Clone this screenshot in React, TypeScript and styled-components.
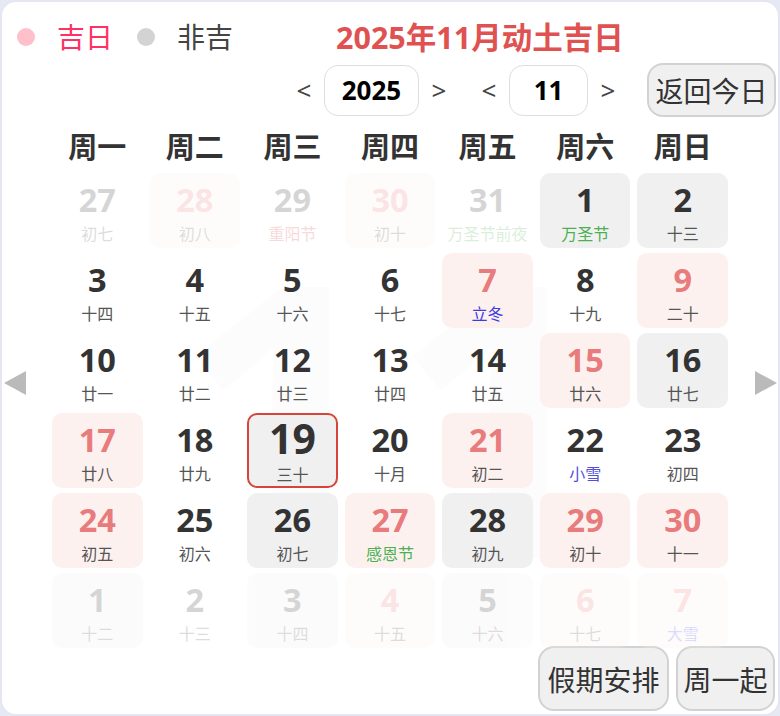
import * as React from 'react'
import styled, {createGlobalStyle, css} from 'styled-components'

const GlobalStyle = createGlobalStyle`
  html, body {
    margin: 0;
    padding: 0;
    background: #e6e9f4;
  }
  body {
    font-family: "Noto Sans", "Noto Sans CJK SC", sans-serif;
  }
`

// Outer card
const Card = styled.div`
  box-sizing: border-box;
  width: 780px;
  height: 716px;
  background: #fff;
  border: 2px solid #e4e7f3;
  border-radius: 16px;
  display: flex;
  flex-direction: column;
  overflow: hidden;
`

// Legend and title row
const LegendRow = styled.div`
  display: flex;
  align-items: center;
  height: 44px;
  margin-top: 13px;
  padding-left: 15px;
`

const Dot = styled.span<{$color: string}>`
  width: 18px;
  height: 18px;
  border-radius: 50%;
  background: ${({$color}) => $color};
  margin-right: 22px;
`

const LegendText = styled.span<{$color: string}>`
  font-size: 28px;
  color: ${({$color}) => $color};
  margin-right: 24px;
  line-height: 1;
`

const Title = styled.h1`
  margin: 0 0 0 79px;
  font-size: 30.5px;
  font-weight: 700;
  color: #e05252;
  line-height: 1;
`

// Year / month controls
const ControlRow = styled.div`
  display: flex;
  align-items: center;
  justify-content: flex-end;
  height: 54px;
  margin-top: 4px;
  padding-right: 2px;
`

const ArrowText = styled.button`
  width: 40px;
  height: 50px;
  padding: 0;
  border: none;
  background: none;
  font-family: "Noto Sans", sans-serif;
  font-size: 26px;
  color: #444;
  cursor: pointer;
`

const ValueBox = styled.div<{$width: number}>`
  box-sizing: border-box;
  width: ${({$width}) => $width}px;
  height: 51px;
  border: 1px solid #dedede;
  border-radius: 14px;
  display: flex;
  align-items: center;
  justify-content: center;
  font-size: 26px;
  font-weight: 700;
  color: #000;
`

const Spacer = styled.div<{$w: number}>`
  width: ${({$w}) => $w}px;
`

const GrayButton = styled.button<{$width: number; $height: number}>`
  box-sizing: border-box;
  width: ${({$width}) => $width}px;
  height: ${({$height}) => $height}px;
  padding: 0;
  background: #f0f0f0;
  border: 2px solid #d2d2d2;
  border-radius: 16px;
  font-family: "Noto Sans CJK SC", sans-serif;
  font-size: 28px;
  color: #333;
  display: flex;
  align-items: center;
  justify-content: center;
  cursor: pointer;
`

// Calendar body
const Main = styled.div`
  display: flex;
  align-items: center;
`

const SideArrow = styled.div<{$side: 'left' | 'right'}>`
  width: 50px;
  display: flex;
  justify-content: ${({$side}) => ($side === 'left' ? 'flex-start' : 'flex-end')};
  padding: ${({$side}) => ($side === 'left' ? '0 0 0 2px' : '0 1px 0 0')};
  box-sizing: border-box;
`

const Center = styled.div`
  width: 677px;
  display: flex;
  flex-direction: column;
`

const WeekHeader = styled.div`
  display: grid;
  grid-template-columns: repeat(7, 1fr);
  column-gap: 7px;
  height: 40px;
  padding-top: 10px;
  margin-bottom: 6px;
`

const WeekDay = styled.div`
  text-align: center;
  font-size: 29px;
  font-weight: 700;
  color: #333;
  line-height: 40px;
`

const GridWrap = styled.div`
  position: relative;
`

// Faint month number behind the days
const Watermark = styled.div`
  position: absolute;
  inset: 0;
  display: flex;
  align-items: center;
  justify-content: center;
  font-size: 380px;
  font-weight: 700;
  color: rgba(0, 0, 0, 0.011);
  pointer-events: none;
  user-select: none;
  z-index: 0;
`

const Grid = styled.div`
  position: relative;
  z-index: 1;
  display: grid;
  grid-template-columns: repeat(7, 1fr);
  grid-auto-rows: 75px;
  gap: 5px 7px;
`

type Kind = 'plain' | 'ji' | 'bad'

const Cell = styled.div<{$kind: Kind; $other: boolean; $today: boolean}>`
  box-sizing: border-box;
  border-radius: 10px;
  display: flex;
  flex-direction: column;
  align-items: center;
  justify-content: center;
  padding-top: 4px;
  background: ${({$kind}) =>
    $kind === 'ji' ? '#fdf1f0' : $kind === 'bad' ? '#f0f0f0' : 'transparent'};
  opacity: ${({$other}) => ($other ? 0.2 : 1)};
  ${({$today}) =>
    $today &&
    css`
      border: 2px solid #d6443a;
      padding-top: 0;
    `}
`

const DayNum = styled.div<{$ji: boolean; $today: boolean}>`
  font-size: ${({$today}) => ($today ? 41 : 32.5)}px;
  font-weight: 700;
  line-height: ${({$today}) => ($today ? 42 : 36)}px;
  color: ${({$ji}) => ($ji ? '#e87b7b' : '#333')};
`

const Lunar = styled.div<{$color?: string}>`
  margin-top: 4px;
  font-family: "Noto Sans CJK SC", sans-serif;
  font-size: 16px;
  line-height: 22px;
  color: ${({$color}) => $color || '#555'};
  white-space: nowrap;
`

const Footer = styled.div`
  display: flex;
  justify-content: flex-end;
  gap: 7px;
  margin-top: -2px;
  padding-right: 3px;
`

const Triangle = ({dir}: {dir: 'left' | 'right'}) => (
  <svg width="22" height="24" viewBox="0 0 22 24">
    {dir === 'left' ? (
      <polygon points="22,0 22,24 0,12" fill="#bababa" />
    ) : (
      <polygon points="0,0 0,24 22,12" fill="#bababa" />
    )}
  </svg>
)

interface Day {
  n: number
  lunar: string
  kind?: Kind
  other?: boolean
  today?: boolean
  color?: string
}

const RED = '#e04848'
const GREEN = '#4cb050'
const BLUE = '#3c3ce0'

const days: Day[] = [
  {n: 27, lunar: '初七', other: true},
  {n: 28, lunar: '初八', other: true, kind: 'ji'},
  {n: 29, lunar: '重阳节', other: true, color: RED},
  {n: 30, lunar: '初十', other: true, kind: 'ji'},
  {n: 31, lunar: '万圣节前夜', other: true, color: GREEN},
  {n: 1, lunar: '万圣节', kind: 'bad', color: GREEN},
  {n: 2, lunar: '十三', kind: 'bad'},
  {n: 3, lunar: '十四'},
  {n: 4, lunar: '十五'},
  {n: 5, lunar: '十六'},
  {n: 6, lunar: '十七'},
  {n: 7, lunar: '立冬', kind: 'ji', color: BLUE},
  {n: 8, lunar: '十九'},
  {n: 9, lunar: '二十', kind: 'ji'},
  {n: 10, lunar: '廿一'},
  {n: 11, lunar: '廿二'},
  {n: 12, lunar: '廿三'},
  {n: 13, lunar: '廿四'},
  {n: 14, lunar: '廿五'},
  {n: 15, lunar: '廿六', kind: 'ji'},
  {n: 16, lunar: '廿七', kind: 'bad'},
  {n: 17, lunar: '廿八', kind: 'ji'},
  {n: 18, lunar: '廿九'},
  {n: 19, lunar: '三十', kind: 'bad', today: true},
  {n: 20, lunar: '十月'},
  {n: 21, lunar: '初二', kind: 'ji'},
  {n: 22, lunar: '小雪', color: '#5050dd'},
  {n: 23, lunar: '初四'},
  {n: 24, lunar: '初五', kind: 'ji'},
  {n: 25, lunar: '初六'},
  {n: 26, lunar: '初七', kind: 'bad'},
  {n: 27, lunar: '感恩节', kind: 'ji', color: GREEN},
  {n: 28, lunar: '初九', kind: 'bad'},
  {n: 29, lunar: '初十', kind: 'ji'},
  {n: 30, lunar: '十一', kind: 'ji'},
  {n: 1, lunar: '十二', other: true, kind: 'bad'},
  {n: 2, lunar: '十三', other: true},
  {n: 3, lunar: '十四', other: true, kind: 'bad'},
  {n: 4, lunar: '十五', other: true, kind: 'ji'},
  {n: 5, lunar: '十六', other: true, kind: 'bad'},
  {n: 6, lunar: '十七', other: true, kind: 'ji'},
  {n: 7, lunar: '大雪', other: true, kind: 'ji', color: '#5050ee'},
]

const weekDays = ['周一', '周二', '周三', '周四', '周五', '周六', '周日']

export default function App() {
  return (
    <>
      <GlobalStyle />
      <Card>
        <LegendRow>
          <Dot $color="#ffc0cb" />
          <LegendText $color="#ff3062">吉日</LegendText>
          <Dot $color="#d3d3d3" />
          <LegendText $color="#444">非吉</LegendText>
          <Title>2025年11月动土吉日</Title>
        </LegendRow>

        <ControlRow>
          <ArrowText>&lt;</ArrowText>
          <ValueBox $width={95}>2025</ValueBox>
          <ArrowText>&gt;</ArrowText>
          <Spacer $w={10} />
          <ArrowText>&lt;</ArrowText>
          <ValueBox $width={79}>11</ValueBox>
          <ArrowText>&gt;</ArrowText>
          <Spacer $w={19} />
          <GrayButton $width={129} $height={54}>返回今日</GrayButton>
        </ControlRow>

        <Main>
          <SideArrow $side="left">
            <Triangle dir="left" />
          </SideArrow>
          <Center>
            <WeekHeader>
              {weekDays.map(w => (
                <WeekDay key={w}>{w}</WeekDay>
              ))}
            </WeekHeader>
            <GridWrap>
              <Watermark>11</Watermark>
              <Grid>
                {days.map((d, i) => (
                  <Cell
                    key={i}
                    $kind={d.kind || 'plain'}
                    $other={!!d.other}
                    $today={!!d.today}
                  >
                    <DayNum $ji={d.kind === 'ji'} $today={!!d.today}>
                      {d.n}
                    </DayNum>
                    <Lunar $color={d.color}>{d.lunar}</Lunar>
                  </Cell>
                ))}
              </Grid>
            </GridWrap>
          </Center>
          <SideArrow $side="right">
            <Triangle dir="right" />
          </SideArrow>
        </Main>

        <Footer>
          <GrayButton $width={131} $height={65}>假期安排</GrayButton>
          <GrayButton $width={99} $height={65}>周一起</GrayButton>
        </Footer>
      </Card>
    </>
  )
}
